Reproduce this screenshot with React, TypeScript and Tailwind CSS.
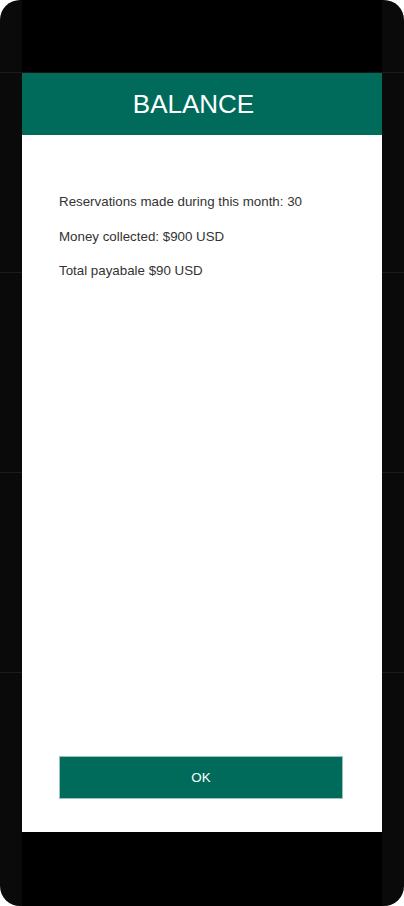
import * as React from "react";

const ROWS = [0, 1, 2, 3];

const SideRail = () => (
  <div className="flex flex-col">
    <div className="h-[72px]" />
    {ROWS.map((r) => (
      <div className="h-[200px] border-t border-t-[#1c1c1c]" key={r} />
    ))}
  </div>
);

const LINES = [
  "Reservations made during this month: 30",
  "Money collected: $900 USD",
  "Total payabale $90 USD",
];

const App = () => (
  <div className="h-[906px] w-[404px] bg-white font-['Liberation_Sans',Arial,sans-serif]">
    <div className="grid h-full grid-cols-[22px_360px_22px] overflow-hidden rounded-[20px] bg-[#0a0a0a]">
      <SideRail />
      <div className="flex flex-col bg-black">
        <div className="h-[73px] border-b border-b-[#161616]" />
        <div className="flex h-[759px] flex-col bg-white">
          <div className="flex h-[62px] items-center justify-center bg-[#006b5a] pr-[17px] text-[26px] text-white">
            BALANCE
          </div>
          <div className="flex flex-1 flex-col pb-[33px] pl-[37px] pr-[39px] pt-[57px]">
            <div className="flex flex-col gap-[14.5px] text-[13.33px] leading-[20px] text-[#333]">
              {LINES.map((line) => (
                <p key={line}>{line}</p>
              ))}
            </div>
            <button className="mt-auto h-[43px] w-full border border-[#9cc2bb] bg-[#006b5a] text-[13.33px] text-white">
              OK
            </button>
          </div>
        </div>
      </div>
      <SideRail />
    </div>
  </div>
);

export default App;
